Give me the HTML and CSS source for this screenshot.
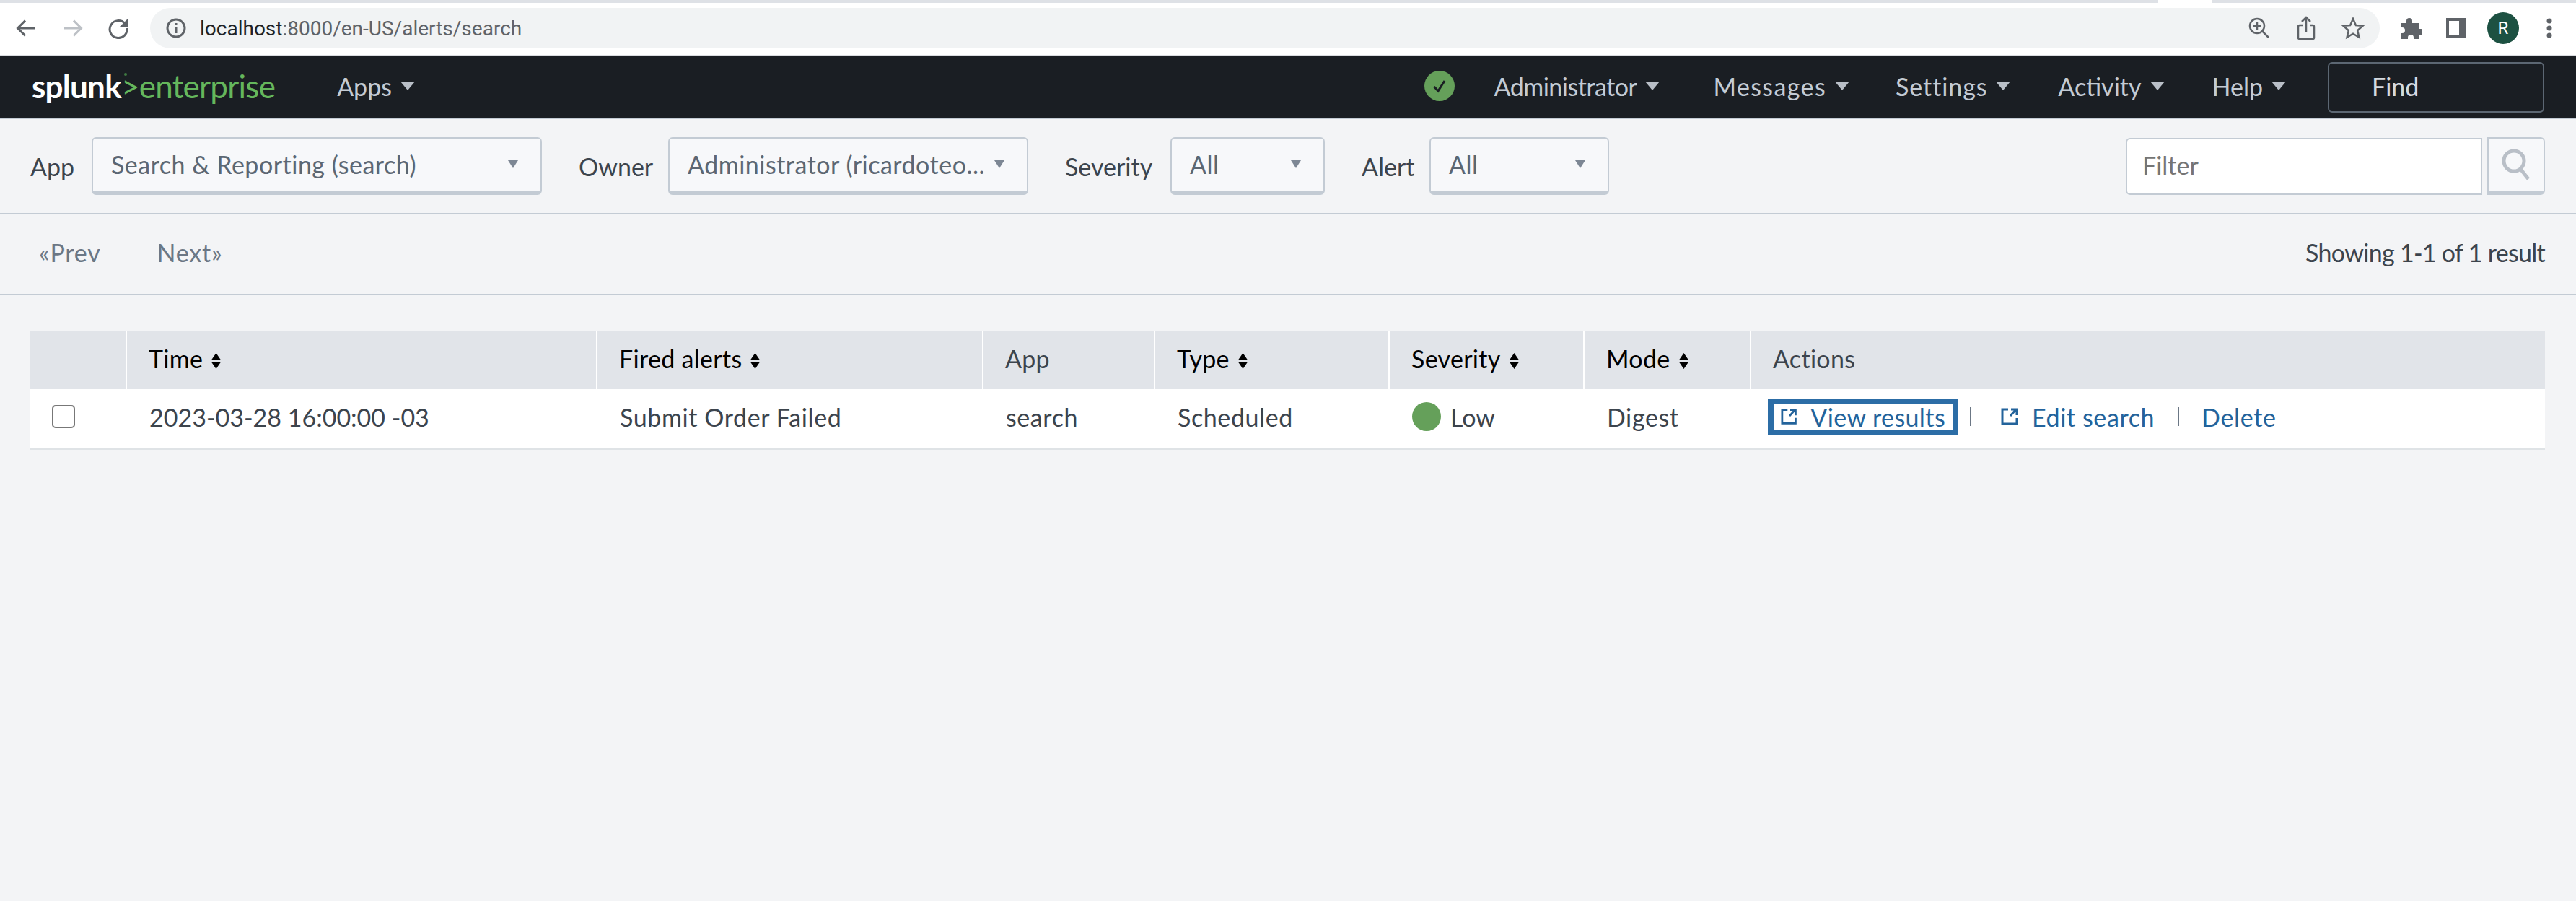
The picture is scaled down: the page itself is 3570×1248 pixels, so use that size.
FILE: index.html
```html
<!DOCTYPE html>
<html>
<head>
  <title>Triggered Alerts | Splunk</title>
  <link rel="stylesheet" href="styles.css">
</head>
<body>
  <div class="tabstrip"><div class="tabstrip-left"></div><div class="tabstrip-right"></div></div>

  <div class="chrome">
    <div class="chrome-btn"><svg width="30" height="30" viewBox="0 0 30 30"><path d="M27 15H4M14 4.500 3.500 15 14 25.500" fill="none" stroke="#5f6368" stroke-width="3"/></svg></div>
    <div class="chrome-btn"><svg width="30" height="30" viewBox="0 0 30 30"><path d="M3 15h23M16 4.500 26.500 15 16 25.500" fill="none" stroke="#bdc1c6" stroke-width="3"/></svg></div>
    <div class="chrome-btn reload"><svg width="30" height="30" viewBox="0 0 30 30"><path d="M24 8.500A12 12 0 1 0 27 15" fill="none" stroke="#5f6368" stroke-width="3"/><path d="M28 2v11H17z" fill="#5f6368"/></svg></div>
    <div class="addr">
      <svg class="info" width="28" height="28" viewBox="0 0 28 28"><circle cx="14" cy="14" r="12" fill="none" stroke="#5f6368" stroke-width="3"/><path d="M12.500 7h3v3h-3zM12.500 12h3v9h-3z" fill="#5f6368"/></svg>
      <span class="url"><b>localhost</b>:8000/en-US/alerts/search</span>
      <div class="addr-icons">
        <div class="chrome-btn"><svg width="30" height="30" viewBox="0 0 30 30"><circle cx="12" cy="12" r="10" fill="none" stroke="#5f6368" stroke-width="2.500"/><path d="M7 12h10M12 7v10M19 19l9 9" fill="none" stroke="#5f6368" stroke-width="2.500"/></svg></div>
        <div class="chrome-btn"><svg width="30" height="34" viewBox="0 0 30 34"><path d="M10 13H6a2 2 0 0 0-2 2v15a2 2 0 0 0 2 2h18a2 2 0 0 0 2-2V15a2 2 0 0 0-2-2h-4M15 23V3M9 8l6-6 6 6" fill="none" stroke="#5f6368" stroke-width="2.500"/></svg></div>
        <div class="chrome-btn"><svg width="32" height="32" viewBox="0 0 32 32"><path d="M16 3l3.900 9 9.600.800-7.300 6.400 2.200 9.500-8.400-5-8.400 5 2.200-9.500-7.300-6.400 9.600-.800z" fill="none" stroke="#5f6368" stroke-width="2.500"/></svg></div>
      </div>
    </div>
    <div class="chrome-btn first-ext"><svg width="32" height="32" viewBox="0 0 32 32"><path d="M2 9h8V6a4 4 0 0 1 8 0v3h9v8h3a4 4 0 0 1 0 8h-3v6h-7v-2a4 4 0 0 0-8 0v2H2v-8h2a4 4 0 0 0 0-8H2z" fill="#5f6368"/></svg></div>
    <div class="chrome-btn sidebar"><svg width="28" height="28" viewBox="0 0 28 28"><path d="M0 0h28v28H0zM4 4v20h14V4z" fill="#5f6368" fill-rule="evenodd"/></svg></div>
    <div class="avatar-box"><div class="avatar">R</div></div>
    <div class="chrome-btn"><svg width="8" height="28" viewBox="0 0 8 28"><circle cx="4" cy="4" r="3.500" fill="#5f6368"/><circle cx="4" cy="14" r="3.500" fill="#5f6368"/><circle cx="4" cy="24" r="3.500" fill="#5f6368"/></svg></div>
  </div>

  <header class="nav">
    <div class="logo"><span class="logo-splunk">splunk</span><span class="logo-green"><span class="logo-chev">&gt;</span>enterprise</span></div>
    <a class="nav-item apps">Apps<i class="caret"></i></a>
    <div class="nav-right">
      <svg class="status" width="42" height="42" viewBox="0 0 42 42"><circle cx="21" cy="21" r="21" fill="#65a05a"/><path d="M13.500 22l5.500 6 9-14" fill="none" stroke="#1a1e23" stroke-width="3"/></svg>
      <a class="nav-item nav-admin">Administrator<i class="caret"></i></a>
      <a class="nav-item nav-messages">Messages<i class="caret"></i></a>
      <a class="nav-item nav-settings">Settings<i class="caret"></i></a>
      <a class="nav-item">Activity<i class="caret"></i></a>
      <a class="nav-item">Help<i class="caret"></i></a>
      <div class="find">Find</div>
    </div>
  </header>

  <div class="toolbar">
    <label class="field-label label-app">App</label>
    <div class="select select-app"><span>Search &amp; Reporting (search)</span><i class="select-caret"></i></div>
    <label class="field-label label-owner">Owner</label>
    <div class="select select-owner"><span>Administrator (ricardoteo...</span><i class="select-caret"></i></div>
    <label class="field-label label-severity">Severity</label>
    <div class="select select-severity"><span>All</span><i class="select-caret"></i></div>
    <label class="field-label label-alert">Alert</label>
    <div class="select select-alert"><span>All</span><i class="select-caret"></i></div>
    <div class="filter">Filter</div>
    <div class="search-btn"><svg width="40" height="44" viewBox="0 0 40 44"><circle cx="17" cy="17" r="14" fill="none" stroke="#b9bfc7" stroke-width="5"/><path d="M26 28l11 14" fill="none" stroke="#b9bfc7" stroke-width="5"/></svg></div>
  </div>

  <div class="pager">
    <a class="page-link">«Prev</a>
    <a class="page-link next">Next»</a>
    <span class="count">Showing 1-1 of 1 result</span>
  </div>

  <table class="alerts">
    <colgroup>
      <col class="c-check"><col class="c-time"><col class="c-name"><col class="c-app"><col class="c-type"><col class="c-sev"><col class="c-mode"><col>
    </colgroup>
    <thead>
      <tr>
        <th></th>
        <th class="sortable">Time<svg class="sort" width="13" height="22" viewBox="0 0 13 22"><path d="M6.500 0l6.500 9.500H0zM6.500 22L0 12.500h13z"/></svg></th>
        <th class="sortable">Fired alerts<svg class="sort" width="13" height="22" viewBox="0 0 13 22"><path d="M6.500 0l6.500 9.500H0zM6.500 22L0 12.500h13z"/></svg></th>
        <th>App</th>
        <th class="sortable">Type<svg class="sort" width="13" height="22" viewBox="0 0 13 22"><path d="M6.500 0l6.500 9.500H0zM6.500 22L0 12.500h13z"/></svg></th>
        <th class="sortable">Severity<svg class="sort" width="13" height="22" viewBox="0 0 13 22"><path d="M6.500 0l6.500 9.500H0zM6.500 22L0 12.500h13z"/></svg></th>
        <th class="sortable">Mode<svg class="sort" width="13" height="22" viewBox="0 0 13 22"><path d="M6.500 0l6.500 9.500H0zM6.500 22L0 12.500h13z"/></svg></th>
        <th>Actions</th>
      </tr>
    </thead>
    <tbody>
      <tr>
        <td class="check-cell"><div class="checkbox"></div></td>
        <td class="time-cell">2023-03-28 16:00:00 -03</td>
        <td>Submit Order Failed</td>
        <td>search</td>
        <td>Scheduled</td>
        <td><div class="sev"><i class="dot"></i>Low</div></td>
        <td>Digest</td>
        <td>
          <div class="actions">
            <a class="action focused"><svg class="ext" width="24" height="24" viewBox="0 0 24 24"><path d="M10 2H2v20h20v-8M13 11l8-9M14 2h8v8" fill="none" stroke="#23639b" stroke-width="3"/></svg>View results</a>
            <i class="sep"></i>
            <a class="action edit"><svg class="ext" width="24" height="24" viewBox="0 0 24 24"><path d="M10 2H2v20h20v-8M13 11l8-9M14 2h8v8" fill="none" stroke="#23639b" stroke-width="3"/></svg>Edit search</a>
            <i class="sep sep-wide"></i>
            <a class="action del">Delete</a>
          </div>
        </td>
      </tr>
    </tbody>
  </table>
</body>
</html>
```

FILE: styles.css
```css
* { box-sizing: border-box; }
body { margin: 0; background: #f3f4f6; font-family: Lato, "Open Sans", sans-serif; font-size: 34px; color: #3c444d; }

/* browser chrome */
.tabstrip { display: flex; height: 4px; background: #fff; }
.tabstrip-left { width: 2991px; background: #dee1e6; }
.tabstrip-right { margin-left: 75px; flex: 1; background: #dee1e6; }
.chrome { display: flex; align-items: center; height: 74px; padding: 0 0 2px 3px; background: #fff; border-bottom: 2px solid #dadce0; }
.chrome-btn { width: 65px; display: flex; align-items: center; justify-content: center; flex: none; }
.reload { padding-right: 3px; }
.sidebar { padding-right: 3px; }
.addr { display: flex; align-items: center; width: 3090px; height: 56px; margin-left: 10px; padding: 0 5px 0 22px; background: #f1f3f4; border-radius: 28px; }
.url { margin-left: 19px; font-family: Roboto, sans-serif; font-size: 28px; color: #5f6368; }
.url b { font-weight: 400; color: #202124; }
.addr-icons { display: flex; margin-left: auto; }
.first-ext { margin-left: 10px; }
.avatar-box { width: 62px; display: flex; justify-content: center; flex: none; }
.avatar { width: 44px; height: 44px; border-radius: 50%; background: #1d5142; color: #fff; font-family: Roboto, sans-serif; font-size: 24px; line-height: 44px; text-align: center; }

/* splunk bar */
.nav { display: flex; align-items: center; height: 87px; padding: 0 44px; background: #1a1e23; border-bottom: 2px solid #c3cbd4; color: #c3cbd4; }
.logo { padding-bottom: 4px; font-size: 44px; letter-spacing: -.75px; }
.logo-splunk { color: #fff; font-weight: 700; }
.logo-green { color: #65b75c; }
.logo-chev { position: relative; }
.logo-chev::before { content: ""; position: absolute; left: 4px; top: 8px; width: 4px; height: 4px; border-radius: 50%; background: #3f7a42; }
.nav-item { display: flex; align-items: center; padding-bottom: 3px; }
.caret { width: 0; height: 0; margin-left: 12px; border-left: 10px solid transparent; border-right: 10px solid transparent; border-top: 12px solid #b9bfc7; }
.apps { margin-left: 86px; }
.nav-right { display: flex; align-items: center; margin-left: auto; }
.nav-right .nav-item { margin-left: 66px; }
.nav-right .nav-messages { margin-left: 74px; }
.nav-right .nav-settings { margin-left: 64px; }
.nav-admin { letter-spacing: -.5px; }
.nav-messages { letter-spacing: 1.4px; }
.nav-settings { letter-spacing: .9px; }
.status { margin: 0 -11px 3px 0; }
.find { width: 300px; height: 70px; margin-left: 58px; padding-left: 59px; border: 2px solid #5c6773; border-radius: 6px; color: #d5dae0; line-height: 64px; }

/* filters */
.toolbar { display: flex; align-items: center; height: 132px; padding: 0 43px 0 42px; border-bottom: 2px solid #c3cbd4; }
.label-app { width: 85px; }
.label-owner { width: 124px; }
.label-severity { width: 146px; }
.label-alert { width: 94px; }
.select { display: flex; align-items: center; justify-content: space-between; height: 80px; margin-right: 51px; padding: 0 31px 2px 25px; background: #f7f8fa; border: 2px solid #c3cbd4; border-bottom-width: 6px; border-radius: 6px; color: #5c6773; letter-spacing: .5px; white-space: nowrap; }
.select-app { width: 624px; }
.select-owner { width: 499px; }
.select-severity { width: 214px; }
.select-alert { width: 249px; margin-right: 0; }
.select-caret { width: 0; height: 0; border-left: 7px solid transparent; border-right: 7px solid transparent; border-top: 11px solid #7d8794; }
.filter { width: 494px; height: 79px; margin-left: auto; padding-left: 21px; background: #fff; border: 2px solid #c3cbd4; border-radius: 6px 0 0 6px; color: #757575; line-height: 72px; }
.search-btn { display: flex; align-items: center; justify-content: center; width: 80px; height: 80px; margin-left: 7px; background: #f7f8fa; border: 2px solid #c3cbd4; border-bottom-width: 6px; border-radius: 0 6px 6px 0; }

/* pager */
.pager { display: flex; align-items: center; height: 112px; padding: 0 43px 6px 54px; border-bottom: 2px solid #c3cbd4; }
.page-link { color: #6b7785; letter-spacing: .8px; }
.next { margin-left: 78px; }
.count { margin-left: auto; letter-spacing: -.7px; }

/* table */
.alerts { width: 3485px; margin: 50px 0 0 42px; border-collapse: collapse; table-layout: fixed; }
.c-check { width: 133px; }
.c-time { width: 652px; }
.c-name { width: 535px; }
.c-app { width: 238px; }
.c-type { width: 325px; }
.c-sev { width: 270px; }
.c-mode { width: 231px; }
th { height: 80px; padding: 0 0 6px 30px; background: #e1e4e9; border-left: 2px solid #fff; font-weight: 400; letter-spacing: .3px; text-align: left; }
th:first-child { border-left: 0; }
.sortable { color: #000; }
.sort { margin-left: 12px; vertical-align: -1px; }
td { height: 82px; padding: 0 0 4px 32px; background: #fff; border-bottom: 3px solid #dfe3e6; letter-spacing: .6px; white-space: nowrap; }
.time-cell { letter-spacing: 0; }
.check-cell { padding-left: 30px; }
.checkbox { width: 32px; height: 32px; background: #fff; border: 2px solid #777; border-radius: 5px; }
.sev { display: flex; align-items: center; letter-spacing: 0; }
.dot { width: 40px; height: 40px; margin-right: 13px; border-radius: 50%; background: #65a05a; }
.actions { display: flex; align-items: center; letter-spacing: .4px; }
.action { display: flex; align-items: center; color: #23639b; }
.focused { width: 248px; height: 35px; padding: 0 10px; outline: 8px solid #2c6da6; }
.ext { margin-right: 19px; }
.sep { width: 2px; height: 26px; margin-left: 24px; background: #6b7785; }
.sep-wide { margin-left: 32px; }
.edit { margin-left: 41px; letter-spacing: .6px; }
.del { margin-left: 31px; letter-spacing: .7px; }
```
